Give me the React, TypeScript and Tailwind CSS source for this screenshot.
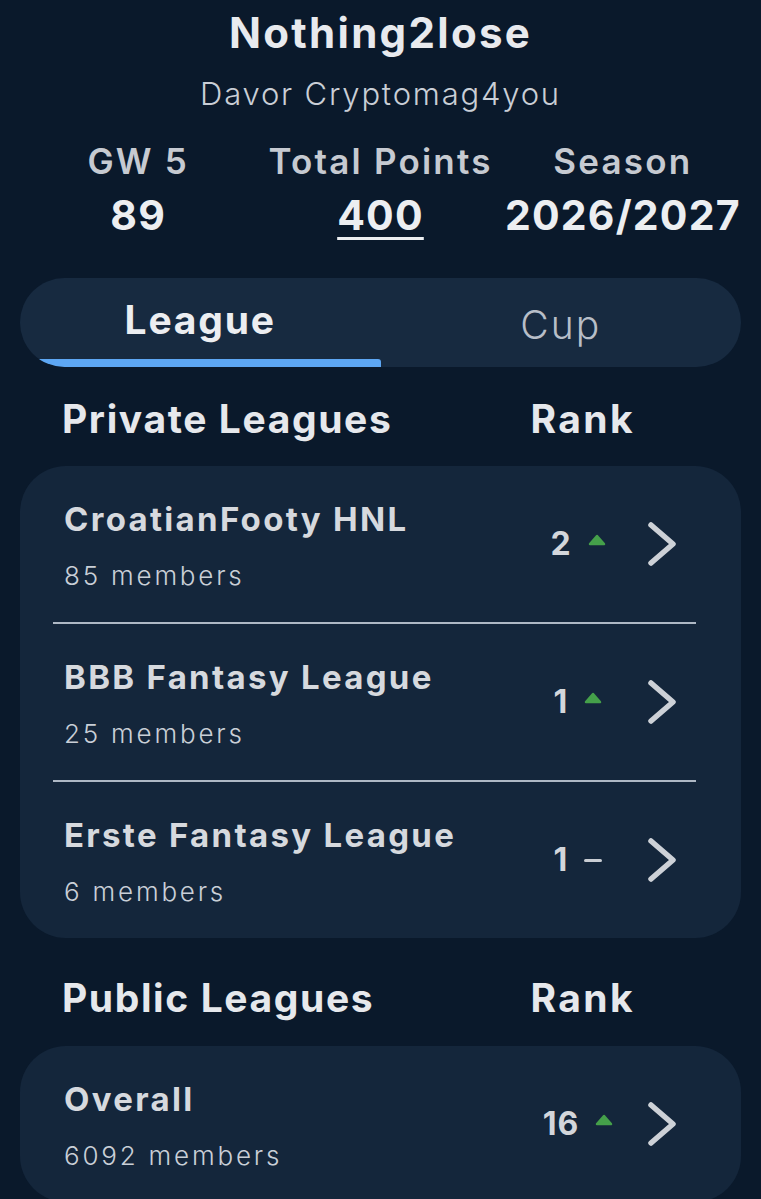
import React from "react";

type League = { name: string; members: string; rank: number; move: "up" | "same" };

const privateLeagues: League[] = [
  { name: "CroatianFooty HNL", members: "85 members", rank: 2, move: "up" },
  { name: "BBB Fantasy League", members: "25 members", rank: 1, move: "up" },
  { name: "Erste Fantasy League", members: "6 members", rank: 1, move: "same" },
];

const publicLeagues: League[] = [
  { name: "Overall", members: "6092 members", rank: 16, move: "up" },
];

const stats = [
  { label: "GW 5", value: "89", underline: false },
  { label: "Total Points", value: "400", underline: true },
  { label: "Season", value: "2026/2027", underline: false },
];

function Chevron() {
  return (
    <svg width="34" height="50" viewBox="0 0 34 50" fill="none">
      <polyline
        points="6,6 28,25 6,44"
        stroke="#cdd1d7"
        strokeWidth="5.5"
        strokeLinecap="round"
        strokeLinejoin="round"
      />
    </svg>
  );
}

function Movement({ move }: { move: "up" | "same" }) {
  if (move === "up") {
    return (
      <svg width="18" height="12" viewBox="0 0 18 12" className="-mt-[8px]">
        <path
          d="M9 2 L16 10 L2 10 Z"
          fill="#45a04a"
          stroke="#45a04a"
          strokeWidth="2.5"
          strokeLinejoin="round"
        />
      </svg>
    );
  }
  return <div className="w-[18px] h-[3px] rounded-full bg-[#c9cdd3]" />;
}

function LeagueRow({ league, last }: { league: League; last: boolean }) {
  return (
    <div>
      <div className="flex items-center">
        <div className="flex-1 pl-[44px] pt-[37px] pb-[34px]">
          <div className="text-[33px] font-bold text-[#d6d9de] leading-[32px] tracking-[2.3px]">
            {league.name}
          </div>
          <div className="mt-[28px] text-[26px] font-light text-[#c9cfd7] leading-[25px] tracking-[2.8px]">
            {league.members}
          </div>
        </div>
        <div className="w-[100px] flex items-center justify-center gap-[16px]">
          <span className="text-[32px] font-bold text-[#d3d6db] leading-[30px] tracking-[1px]">
            {league.rank}
          </span>
          <Movement move={league.move} />
        </div>
        <div className="ml-[17px] mr-[62px]">
          <Chevron />
        </div>
      </div>
      {!last && <div className="ml-[33px] mr-[45px] h-[2px] bg-[#aeb8c5]" />}
    </div>
  );
}

function SectionHeader({ title }: { title: string }) {
  return (
    <div className="flex items-center justify-between pl-[42px] pr-[106px]">
      <span className="text-[39px] font-bold text-[#e6e8ec] leading-[38px] tracking-[1.6px]">{title}</span>
      <span className="text-[39px] font-bold text-[#e6e8ec] leading-[38px] tracking-[2.4px]">Rank</span>
    </div>
  );
}

export default function App() {
  return (
    <div
      className="min-h-screen bg-[#0a192b] px-5 pb-10"
      style={{ fontFamily: "Inter, 'Noto Sans', sans-serif" }}
    >
      <div className="flex flex-col items-center pt-[13px]">
        <h1 className="text-[42px] font-bold text-[#e8eaee] leading-[40px] tracking-[2.3px]">
          Nothing2lose
        </h1>
        <p className="mt-[26px] text-[31px] font-light text-[#c9ced6] leading-[30px] tracking-[1.8px]">
          Davor Cryptomag4you
        </p>
      </div>

      <div className="grid grid-cols-3 mt-[35px] -mx-[3px]">
        {stats.map((s) => (
          <div key={s.label} className="flex flex-col items-center">
            <span className="text-[35px] font-semibold text-[#c6cad1] leading-[34px] tracking-[2.2px]">
              {s.label}
            </span>
            <span
              className={
                s.underline
                  ? "mt-[17px] text-[41px] font-bold text-[#eceef1] leading-none tracking-[1.2px] underline decoration-[3px] underline-offset-[7px]"
                  : "mt-[17px] text-[41px] font-bold text-[#eceef1] leading-none tracking-[1.2px]"
              }
            >
              {s.value}
            </span>
          </div>
        ))}
      </div>

      <div className="mt-[42px] h-[89px] rounded-full bg-[#172a40] overflow-hidden flex">
        <div className="w-1/2 flex flex-col">
          <div className="flex-1 flex items-center justify-center pt-[2px]">
            <span className="text-[39px] font-bold text-[#eceef1] leading-[38px] tracking-[1.8px]">League</span>
          </div>
          <div className="h-[8px] bg-[#5da7f4] rounded-tr-[3px]" />
        </div>
        <div className="w-1/2 flex items-center justify-center pt-[4px]">
          <span className="text-[39px] font-light text-[#b7bec8] leading-[38px] tracking-[2px]">Cup</span>
        </div>
      </div>

      <div className="mt-[33px]">
        <SectionHeader title="Private Leagues" />
      </div>
      <div className="mt-[28px] rounded-[46px] bg-[#14263b]">
        {privateLeagues.map((l, i) => (
          <LeagueRow key={l.name} league={l} last={i === privateLeagues.length - 1} />
        ))}
      </div>

      <div className="mt-[41px]">
        <SectionHeader title="Public Leagues" />
      </div>
      <div className="mt-[29px] rounded-[46px] bg-[#14263b]">
        {publicLeagues.map((l, i) => (
          <LeagueRow key={l.name} league={l} last={i === publicLeagues.length - 1} />
        ))}
      </div>
    </div>
  );
}
